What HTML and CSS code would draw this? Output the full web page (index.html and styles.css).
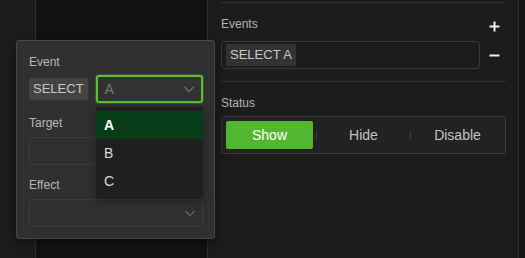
FILE: index.html
```html
<!DOCTYPE html>
<html>
<head>
<meta charset="utf-8">
<link rel="stylesheet" href="styles.css">
</head>
<body>
<div class="app">
  <div class="strip"></div>
  <div class="canvas"></div>
  <div class="panel">
    <div class="divider first"></div>
    <div class="head">
      <span class="label">Events</span>
      <button class="icon-btn plus" aria-label="Add">
        <svg width="11" height="11" viewBox="0 0 11 11"><path d="M5.5 0.5v10M0.5 5.5h10" stroke="#f2f2f2" stroke-width="2"/></svg>
      </button>
    </div>
    <div class="events-row">
      <div class="tag-input"><span class="tag">SELECT A</span></div>
      <button class="icon-btn minus" aria-label="Remove">
        <svg width="11" height="3" viewBox="0 0 11 3"><path d="M0.5 1.5h10" stroke="#f2f2f2" stroke-width="2"/></svg>
      </button>
    </div>
    <div class="divider"></div>
    <div class="label status-label">Status</div>
    <div class="segmented">
      <div class="seg active">Show</div>
      <span class="sep"></span>
      <div class="seg">Hide</div>
      <span class="sep"></span>
      <div class="seg">Disable</div>
    </div>
  </div>
  <div class="edge"></div>

  <div class="popover">
    <div class="plabel">Event</div>
    <div class="event-row">
      <span class="ptag">SELECT</span>
      <div class="select focused">
        <span class="placeholder">A</span>
        <svg class="chev" width="10" height="7" viewBox="0 0 10 7"><path d="M0.5 0.8L5 5.6L9.5 0.8" fill="none" stroke="#7a7a7a" stroke-width="1.1"/></svg>
      </div>
    </div>
    <div class="plabel gap">Target</div>
    <div class="field"></div>
    <div class="plabel gap">Effect</div>
    <div class="field">
      <svg class="chev" width="10" height="7" viewBox="0 0 10 7"><path d="M0.5 0.8L5 5.6L9.5 0.8" fill="none" stroke="#6a6a6a" stroke-width="1.1"/></svg>
    </div>
    <ul class="menu">
      <li class="item selected">A</li>
      <li class="item">B</li>
      <li class="item">C</li>
    </ul>
  </div>
</div>
</body>
</html>
```

FILE: styles.css
```css
* { box-sizing: border-box; }
html, body { margin: 0; padding: 0; }
body {
  background: #151515;
  font-family: "Liberation Sans", Arial, sans-serif;
  width: 525px;
  height: 258px;
  overflow: hidden;
}
.app {
  position: relative;
  display: flex;
  height: 258px;
}
.strip {
  width: 36px;
  background: #1c1c1c;
  border-right: 1px solid #2e2e2e;
}
.canvas {
  width: 172px;
  background: #121212;
  border-right: 1px solid #2e2e2e;
}
.panel {
  width: 311px;
  background: #1c1c1c;
  border-right: 1px solid #2c2c2c;
  padding: 2px 12px 0 13px;
}
.edge {
  flex: 1;
  background: #151515;
}
.divider {
  height: 1px;
  background: #313131;
}
.label {
  font-size: 12px;
  line-height: 16px;
  color: #b4b4b4;
}
.head {
  display: flex;
  justify-content: space-between;
  align-items: flex-start;
  margin-top: 13px;
}
.icon-btn {
  border: 0;
  background: none;
  padding: 0;
  display: flex;
  cursor: pointer;
}
.plus { margin-top: 5px; margin-right: 6px; }
.events-row {
  display: flex;
  align-items: center;
  justify-content: space-between;
  margin-top: 9px;
  margin-bottom: 12px;
}
.tag-input {
  width: 259px;
  height: 28px;
  border: 1px solid #3a3a3a;
  border-radius: 4px;
  padding: 2px 4px;
  display: flex;
  align-items: center;
}
.tag {
  background: #333333;
  color: #c8c8c8;
  font-size: 13px;
  line-height: 22px;
  padding: 0 4px;
  border-radius: 2px;
}
.minus { margin-right: 6px; }
.status-label { margin-top: 13px; }
.segmented {
  margin-top: 5px;
  height: 38px;
  border: 1px solid #393939;
  border-radius: 3px;
  background: #222222;
  padding: 4px;
  display: flex;
  align-items: center;
}
.seg {
  flex: 1;
  height: 28px;
  display: flex;
  align-items: center;
  justify-content: center;
  font-size: 14px;
  color: #c4c4c4;
  border-radius: 2px;
}
.seg.active {
  background: #52b72f;
  color: #ffffff;
}
.sep {
  width: 1px;
  height: 8px;
  margin: 0 3px;
  background: #3e3e3e;
}

/* popover */
.popover {
  position: absolute;
  left: 16px;
  top: 40px;
  width: 199px;
  height: 199px;
  background: #303030;
  border: 1px solid #474747;
  border-radius: 3px;
  padding: 13px 11px 0 12px;
  box-shadow: 0 4px 14px rgba(0, 0, 0, 0.45);
}
.plabel {
  font-size: 12px;
  line-height: 16px;
  color: #b8b8b8;
}
.plabel.gap { margin-top: 12px; }
.event-row {
  display: flex;
  align-items: center;
  gap: 8px;
  margin-top: 5px;
  height: 28px;
}
.ptag {
  background: #434343;
  color: #c6c6c6;
  font-size: 13px;
  line-height: 22px;
  padding: 0 4px;
  border-radius: 2px;
}
.select {
  flex: 1;
  height: 28px;
  border-radius: 3px;
  background: #323232;
  display: flex;
  align-items: center;
  justify-content: space-between;
  padding: 0 7px 0 7px;
}
.select.focused {
  border: 2px solid #56c22c;
  box-shadow: 0 0 0 1px rgba(86, 194, 44, 0.25);
}
.placeholder {
  font-size: 14px;
  color: #767676;
}
.field {
  margin-top: 6px;
  height: 28px;
  border: 1px solid #3c3c3c;
  border-radius: 3px;
  display: flex;
  align-items: center;
  justify-content: flex-end;
  padding-right: 7px;
}
.chev { display: block; }
.menu {
  position: absolute;
  left: 79px;
  top: 66px;
  width: 107px;
  margin: 0;
  padding: 4px 0;
  list-style: none;
  background: #1f1f1f;
  border-radius: 2px;
  box-shadow: 0 3px 10px rgba(0, 0, 0, 0.35);
}
.item {
  height: 28px;
  line-height: 28px;
  padding-left: 8px;
  font-size: 14px;
  color: #dcdcdc;
}
.item.selected {
  background: #073c19;
  color: #ffffff;
  font-weight: bold;
}
```
